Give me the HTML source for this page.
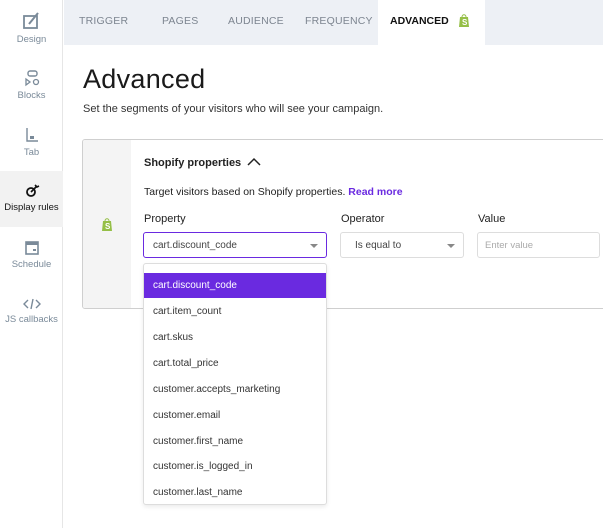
<!DOCTYPE html><html><head><style>
*{box-sizing:border-box;margin:0;padding:0}
body{width:603px;height:528px;overflow:hidden;background:#fff;font-family:"Liberation Sans",sans-serif;position:relative;color:#222}
.side{position:absolute;left:0;top:0;width:63px;height:528px;background:#fff;border-right:1px solid #e6e6e6}
.it{position:absolute;left:0;width:63px;text-align:center;font-size:9.5px;color:#7a8a99}
.it svg{display:block;margin:0 auto 3px}
.top{position:absolute;left:64px;top:0;width:539px;height:45px;background:#edf0f5}
.tab{position:absolute;top:15px;font-size:10.5px;color:#7d8590;letter-spacing:.2px}
.adv{position:absolute;left:378px;top:0;width:107px;height:45px;background:#fff}
h1{position:absolute;left:83px;top:64px;font-size:27px;font-weight:normal;color:#1a1a1a;letter-spacing:.3px}
.sub{position:absolute;left:83px;top:103px;font-size:11px;color:#333}
.card{position:absolute;left:82px;top:139px;width:530px;height:170px;border:1px solid #cfcfcf;border-radius:3px;overflow:hidden}
.strip{position:absolute;left:0;top:0;width:48px;height:170px;background:#f4f4f4}
.lab{position:absolute;font-size:11px;color:#222}
.box{position:absolute;height:26px;border:1px solid #ddd;border-radius:3px;font-size:10px;color:#444;padding:7px 0 0 9px;background:#fff}
.arr{position:absolute;right:8px;top:11px;border-left:4px solid transparent;border-right:4px solid transparent;border-top:4px solid #888}
.dd{position:absolute;left:143px;top:263px;width:184px;height:242px;border:1px solid #ddd;border-radius:3px;background:#fff;box-shadow:0 2px 4px rgba(0,0,0,.08)}
.o{position:absolute;left:0;width:182px;height:25px;font-size:10px;color:#333;padding:7px 0 0 9px}
</style></head><body>
<div class="side">
 <div class="it" style="top:11px"><svg width="20" height="20" viewBox="0 0 20 20"><rect x="2" y="5" width="13" height="12" fill="none" stroke="#7a8a99" stroke-width="1.8"/><path d="M7 13l9-11" stroke="#7a8a99" stroke-width="2"/></svg>Design</div>
 <div class="it" style="top:69px"><svg width="18" height="18" viewBox="0 0 18 18"><rect x="5" y="2" width="9" height="5" rx="2" fill="none" stroke="#7a8a99" stroke-width="1.4"/><path d="M3 10v6l4-3z" fill="none" stroke="#7a8a99" stroke-width="1.3"/><circle cx="13" cy="13" r="2.5" fill="none" stroke="#7a8a99" stroke-width="1.3"/></svg>Blocks</div>
 <div class="it" style="top:126px"><svg width="16" height="18" viewBox="0 0 16 18"><path d="M3 2v13h11" fill="none" stroke="#7a8a99" stroke-width="1.4"/><rect x="6" y="10" width="4" height="3" fill="#7a8a99"/></svg>Tab</div>
 <div class="it" style="top:171px;height:56px;background:#f2f2f2;color:#111;padding-top:12px"><svg width="16" height="16" viewBox="0 0 16 16"><circle cx="7" cy="9" r="4" fill="none" stroke="#111" stroke-width="1.8"/><path d="M7 9l5-5M11 2l2 2 2-1" stroke="#111" stroke-width="1.6" fill="none"/></svg>Display rules</div>
 <div class="it" style="top:240px"><svg width="16" height="16" viewBox="0 0 16 16"><rect x="2" y="2" width="12" height="12" fill="none" stroke="#7a8a99" stroke-width="1.6"/><rect x="2" y="2" width="12" height="3" fill="#7a8a99"/><rect x="9" y="9" width="3" height="2" fill="#7a8a99"/></svg>Schedule</div>
 <div class="it" style="top:297px"><svg width="18" height="14" viewBox="0 0 18 14"><path d="M5 3L1 7l4 4M13 3l4 4-4 4M10 2L8 12" fill="none" stroke="#7a8a99" stroke-width="1.4"/></svg>JS callbacks</div>
</div>
<div class="top">
 <div class="tab" style="left:15px">TRIGGER</div>
 <div class="tab" style="left:98px">PAGES</div>
 <div class="tab" style="left:164px">AUDIENCE</div>
 <div class="tab" style="left:241px">FREQUENCY</div>
</div>
<div class="adv"><span style="position:absolute;left:12px;top:15px;font-size:10.5px;font-weight:bold;color:#111">ADVANCED</span><svg style="position:absolute;left:80px;top:13px" width="12" height="15" viewBox="0 0 12 15"><path d="M2 4h8l1 10H1z" fill="#95bf47"/><path d="M4 4c0-3 4-3 4 0" fill="none" stroke="#95bf47"/><text x="4" y="12" font-size="8" fill="#fff" font-weight="bold" font-family="Liberation Sans">S</text></svg></div>
<h1>Advanced</h1>
<div class="sub">Set the segments of your visitors who will see your campaign.</div>
<div class="card">
 <div class="strip"><svg style="position:absolute;left:18px;top:77px" width="12" height="15" viewBox="0 0 12 15"><path d="M2 4h8l1 10H1z" fill="#95bf47"/><path d="M4 4c0-3 4-3 4 0" fill="none" stroke="#95bf47"/><text x="4" y="12" font-size="8" fill="#fff" font-weight="bold" font-family="Liberation Sans">S</text></svg></div>
 <div class="lab" style="left:61px;top:17px;font-weight:bold">Shopify properties <svg width="14" height="9" viewBox="0 0 14 9" style="margin-left:3px"><path d="M1 8l6-6 6 6" fill="none" stroke="#222" stroke-width="1.5"/></svg></div>
 <div class="lab" style="left:61px;top:46px;font-size:10.5px">Target visitors based on Shopify properties. <b style="color:#6a2ae0">Read more</b></div>
 <div class="lab" style="left:61px;top:73px">Property</div>
 <div class="lab" style="left:258px;top:73px">Operator</div>
 <div class="lab" style="left:395px;top:73px">Value</div>
</div>
<div class="box" style="left:143px;top:232px;width:184px;border-color:#6a2ae0">cart.discount_code<span class="arr"></span></div>
<div class="box" style="left:340px;top:232px;width:124px;padding-left:14px">Is equal to<span class="arr"></span></div>
<div class="box" style="left:477px;top:232px;width:123px;color:#aaa;font-size:9.5px;padding-left:7px">Enter value</div>
<div class="dd">
 <div class="o" style="top:9px;background:#6a2ae0;color:#fff">cart.discount_code</div>
 <div class="o" style="top:35px">cart.item_count</div>
 <div class="o" style="top:61px">cart.skus</div>
 <div class="o" style="top:87px">cart.total_price</div>
 <div class="o" style="top:113px">customer.accepts_marketing</div>
 <div class="o" style="top:139px">customer.email</div>
 <div class="o" style="top:165px">customer.first_name</div>
 <div class="o" style="top:190px">customer.is_logged_in</div>
 <div class="o" style="top:216px">customer.last_name</div>
</div>
</body></html>
